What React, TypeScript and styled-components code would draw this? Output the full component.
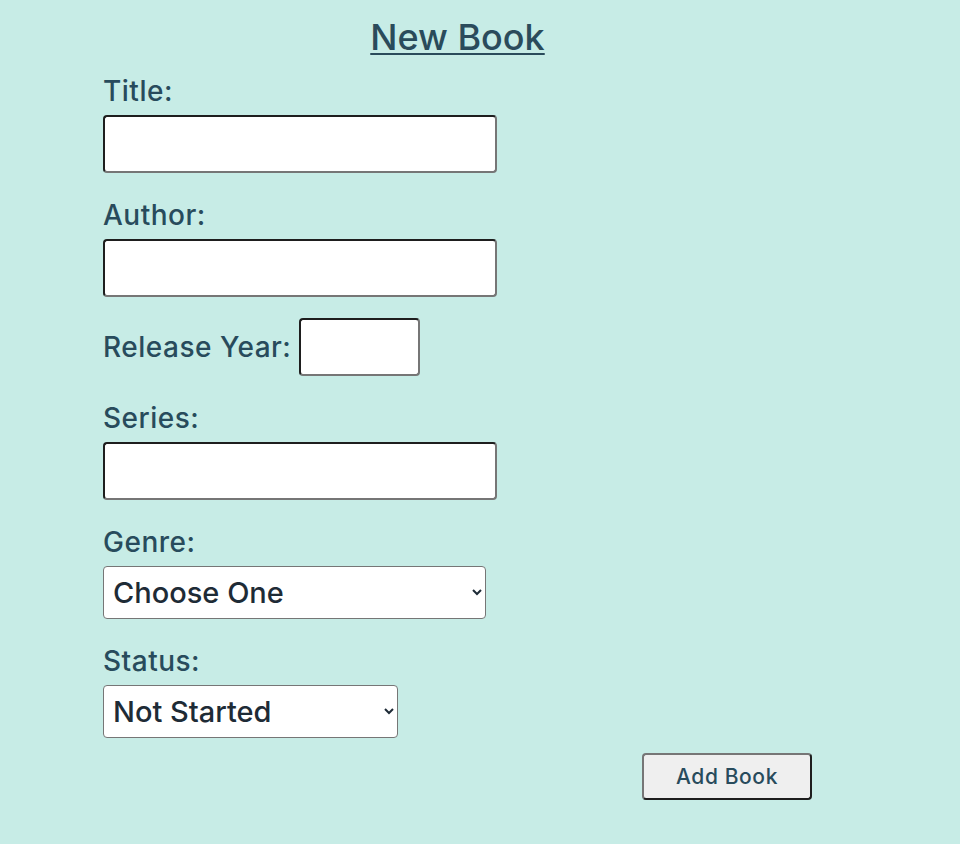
import React from "react";
import styled, { createGlobalStyle } from "styled-components";

const Global = createGlobalStyle`
  html, body { margin: 0; padding: 0; background: #c7ece6; }
  body { font-family: Inter, "Noto Sans", sans-serif; color: #284b5c; }
`;

const Page = styled.div`
  min-height: 844px;
  background: #c7ece6;
  padding-top: 15px;
  box-sizing: border-box;
`;

const Form = styled.form`
  margin-left: 103px;
  width: 709px;
  display: flex;
  flex-direction: column;
  gap: 25px;
`;

const Heading = styled.h1`
  margin: 0 0 -10px 0;
  font-size: 36px;
  line-height: 44px;
  font-weight: 500;
  text-align: center;
  text-decoration: underline;
  text-decoration-thickness: 2px;
  text-underline-offset: 3px;
  color: #2a4b5b;
`;

const Field = styled.div`
  display: flex;
  flex-direction: column;
  align-items: flex-start;
  gap: 6px;
`;

const InlineField = styled.div`
  display: flex;
  align-items: center;
  gap: 8px;
  margin-top: -4px;
`;

const Label = styled.label`
  font-size: 28px;
  line-height: 35px;
  font-weight: 500;
  letter-spacing: 0.5px;
  color: #284b5c;
`;

const TextInput = styled.input<{ $w: number }>`
  box-sizing: border-box;
  width: ${(p) => p.$w}px;
  height: 58px;
  background: #fff;
  border-style: solid;
  border-width: 2px;
  border-color: #1e1e1e #767676 #767676 #1e1e1e;
  border-radius: 4px;
  padding: 0 8px;
  font-size: 24px;
  font-family: inherit;
  outline: none;
`;

const Select = styled.select<{ $w: number }>`
  box-sizing: border-box;
  width: ${(p) => p.$w}px;
  height: 53px;
  background: #fff;
  border: 1px solid #767676;
  border-radius: 4px;
  padding: 0 5px;
  font-size: 29px;
  font-weight: 500;
  font-family: Inter, "Noto Sans", sans-serif;
  color: #1e2b36;
`;

const Actions = styled.div`
  display: flex;
  justify-content: flex-end;
  margin-top: -10px;
`;

const Button = styled.button`
  box-sizing: border-box;
  width: 170px;
  height: 47px;
  background: #efefef;
  border-style: solid;
  border-width: 2px;
  border-color: #767676 #1e1e1e #1e1e1e #767676;
  border-radius: 4px;
  font-family: Inter, "Noto Sans", sans-serif;
  font-size: 21px;
  font-weight: 500;
  letter-spacing: 0.6px;
  color: #284b5c;
  cursor: pointer;
`;

export default function App() {
  return (
    <Page>
      <Global />
      <Form onSubmit={(e) => e.preventDefault()}>
        <Heading>New Book</Heading>
        <Field>
          <Label htmlFor="title">Title:</Label>
          <TextInput id="title" $w={394} />
        </Field>
        <Field>
          <Label htmlFor="author">Author:</Label>
          <TextInput id="author" $w={394} />
        </Field>
        <InlineField>
          <Label htmlFor="year">Release Year:</Label>
          <TextInput id="year" $w={121} />
        </InlineField>
        <Field>
          <Label htmlFor="series">Series:</Label>
          <TextInput id="series" $w={394} />
        </Field>
        <Field>
          <Label htmlFor="genre">Genre:</Label>
          <Select id="genre" $w={383} defaultValue="">
            <option value="">Choose One</option>
            <option>Fantasy</option>
            <option>Science Fiction</option>
            <option>Mystery</option>
          </Select>
        </Field>
        <Field>
          <Label htmlFor="status">Status:</Label>
          <Select id="status" $w={295} defaultValue="not">
            <option value="not">Not Started</option>
            <option>Reading</option>
            <option>Finished</option>
          </Select>
        </Field>
        <Actions>
          <Button type="submit">Add Book</Button>
        </Actions>
      </Form>
    </Page>
  );
}
